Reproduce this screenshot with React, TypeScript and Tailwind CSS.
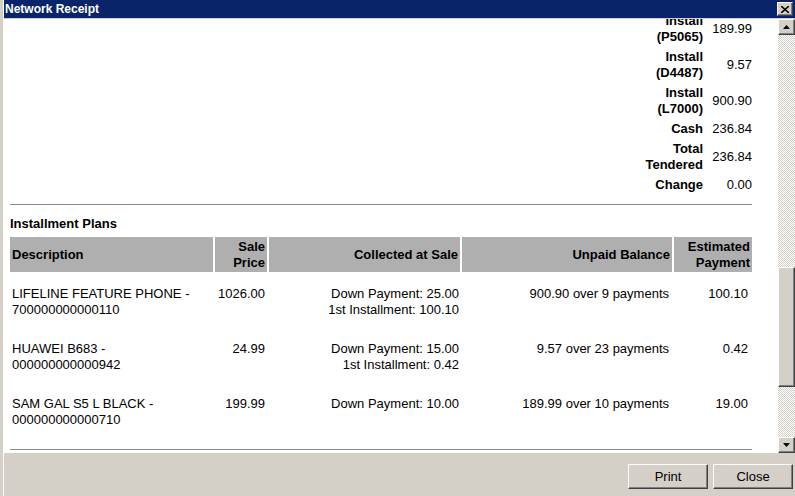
import React from "react";

const font = "font-['Liberation_Sans',Arial,sans-serif]";

const totals = [
  { label: "Install (P5065)", value: "189.99" },
  { label: "Install (D4487)", value: "9.57" },
  { label: "Install (L7000)", value: "900.90" },
  { label: "Cash", value: "236.84" },
  { label: "Total Tendered", value: "236.84" },
  { label: "Change", value: "0.00" },
];

const plans = [
  {
    desc: ["LIFELINE FEATURE PHONE -", "700000000000110"],
    price: "1026.00",
    collected: ["Down Payment: 25.00", "1st Installment: 100.10"],
    unpaid: "900.90 over 9 payments",
    est: "100.10",
  },
  {
    desc: ["HUAWEI B683 -", "000000000000942"],
    price: "24.99",
    collected: ["Down Payment: 15.00", "1st Installment: 0.42"],
    unpaid: "9.57 over 23 payments",
    est: "0.42",
  },
  {
    desc: ["SAM GAL S5 L BLACK -", "000000000000710"],
    price: "199.99",
    collected: ["Down Payment: 10.00"],
    unpaid: "189.99 over 10 payments",
    est: "19.00",
  },
];

const bevel =
  "bg-[#d4d0c8] border border-t-white border-l-white border-r-[#404040] border-b-[#404040] shadow-[inset_-1px_-1px_0_#808080]";

const checker =
  "bg-[repeating-conic-gradient(#d4d0c8_0_25%,#ffffff_0_50%)] bg-[length:2px_2px]";

function Arrow({ down }: { down?: boolean }) {
  return (
    <svg width="7" height="4" viewBox="0 0 7 4">
      <path d={down ? "M0 0h7L3.5 4z" : "M0 4h7L3.5 0z"} fill="#000" />
    </svg>
  );
}

export default function App() {
  return (
    <div className={`flex h-[496px] w-[795px] overflow-hidden bg-[#d4d0c8] text-[13px] text-black ${font}`}>
      <div className="w-[4px] border-r border-r-white bg-[#d4d0c8]" />
      <div className="flex flex-1 flex-col">
        {/* title bar */}
        <div className="flex h-[18px] items-center justify-between bg-[#0a246a] pl-[1px] pr-[2px]">
          <span className="text-[12px] font-bold leading-none text-white">Network Receipt</span>
          <div className={`flex h-[14px] w-[16px] items-center justify-center ${bevel}`}>
            <svg width="8" height="7" viewBox="0 0 8 7">
              <path d="M0 0l8 7M8 0L0 7" stroke="#000" strokeWidth="1.6" />
            </svg>
          </div>
        </div>
        <div className="h-[1px] bg-[#d4d0c8]" />

        <div className="flex h-[434px]">
          {/* content */}
          <div className="flex-1 overflow-hidden bg-white pl-[6px] pr-[26px]">
            <div className="-mt-[6px] ml-auto grid w-fit grid-cols-[68px_49px] items-center gap-y-[4px]">
              {totals.map((t) => (
                <React.Fragment key={t.label}>
                  <div className="text-right font-bold leading-[16px]">{t.label}</div>
                  <div className="text-right leading-[16px]">{t.value}</div>
                </React.Fragment>
              ))}
            </div>
            <div className="mt-[11px] border-t border-[#8c8c8c]" />
            <div className="mt-[11px] font-bold leading-[16px]">Installment Plans</div>

            <div className="mt-[5px] grid grid-cols-[203px_52px_191px_210px_78px] gap-x-[2px]">
              <div className="flex h-[35px] items-center bg-[#b0afb0] pl-[2px] font-bold">Description</div>
              <div className="flex h-[35px] items-center justify-end bg-[#b0afb0] pr-[2px] text-right font-bold leading-[16px]">
                Sale
                <br />
                Price
              </div>
              <div className="flex h-[35px] items-center justify-end bg-[#b0afb0] pr-[2px] font-bold">Collected at Sale</div>
              <div className="flex h-[35px] items-center justify-end bg-[#b0afb0] pr-[2px] font-bold">Unpaid Balance</div>
              <div className="flex h-[35px] items-center justify-end bg-[#b0afb0] pr-[2px] text-right font-bold leading-[16px]">
                Estimated
                <br />
                Payment
              </div>

              {plans.map((p) => (
                <React.Fragment key={p.desc[1]}>
                  <div className="pb-[9px] pl-[2px] pt-[14px] leading-[16px]">
                    {p.desc.map((d) => (
                      <div key={d}>{d}</div>
                    ))}
                  </div>
                  <div className="pr-[2px] pt-[14px] text-right leading-[16px]">{p.price}</div>
                  <div className="pr-[1px] pt-[14px] text-right leading-[16px]">
                    {p.collected.map((c) => (
                      <div key={c}>{c}</div>
                    ))}
                  </div>
                  <div className="pr-[3px] pt-[14px] text-right leading-[16px]">{p.unpaid}</div>
                  <div className="pr-[4px] pt-[14px] text-right leading-[16px]">{p.est}</div>
                </React.Fragment>
              ))}
            </div>
            <div className="mt-[12px] border-t border-[#8c8c8c]" />
          </div>

          {/* scrollbar */}
          <div className="flex w-[17px] flex-col">
            <div className={`flex h-[16px] items-center justify-center ${bevel}`}>
              <Arrow />
            </div>
            <div className={`h-[232px] ${checker}`} />
            <div className={`h-[120px] ${bevel}`} />
            <div className={`flex-1 ${checker}`} />
            <div className={`flex h-[16px] items-center justify-center ${bevel}`}>
              <Arrow down />
            </div>
          </div>
        </div>

        {/* bottom buttons */}
        <div className="flex flex-1 items-start justify-end gap-[5px] pr-[2px] pt-[11px]">
          <button className={`h-[25px] w-[80px] ${bevel} text-[13px]`}>Print</button>
          <button className={`h-[25px] w-[80px] ${bevel} text-[13px]`}>Close</button>
        </div>
      </div>
    </div>
  );
}
